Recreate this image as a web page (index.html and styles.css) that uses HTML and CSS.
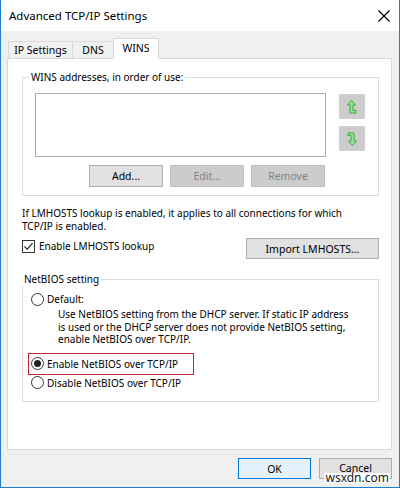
FILE: index.html
```html
<!DOCTYPE html>
<html lang="en">
<head>
    <meta charset="UTF-8">
    <title>Advanced TCP/IP Settings</title>
    <link rel="stylesheet" href="styles.css">
</head>
<body>

<div class="window">
    <div class="titlebar">
        <span class="title">Advanced TCP/IP Settings</span>
        <span class="close">
            <svg width="12" height="12" viewBox="0 0 12 12"><path d="M0.5 0.5 L11.5 11.5 M11.5 0.5 L0.5 11.5" stroke="#000" stroke-width="1.1" fill="none"/></svg>
        </span>
    </div>

    <div class="client">
        <div class="tabs">
            <div class="tab tab-ip">IP Settings</div>
            <div class="tab tab-dns">DNS</div>
            <div class="tab tab-wins active">WINS</div>
        </div>

        <div class="panel">
            <fieldset class="group wins-group">
                <legend>WINS addresses, in order of use:</legend>
                <div class="list-row">
                    <div class="listbox"></div>
                    <div class="order-btns">
                        <button class="icon-btn" disabled>
                            <svg width="10" height="14" viewBox="0 0 10 14"><path d="M4.5 0.5 L8.5 5 H6 V10.5 H9 V13 H3 V5 H0.5 Z" fill="#9be39b" stroke="#3aa83a" stroke-width="1" stroke-linejoin="miter"/></svg>
                        </button>
                        <button class="icon-btn" disabled>
                            <svg width="10" height="14" viewBox="0 0 10 14"><path d="M5.5 13.5 L1.5 9 H4 V3.5 H1 V1 H7 V9 H9.5 Z" fill="#9be39b" stroke="#3aa83a" stroke-width="1" stroke-linejoin="miter"/></svg>
                        </button>
                    </div>
                </div>
                <div class="btn-row">
                    <button class="btn">Add...</button>
                    <button class="btn" disabled>Edit...</button>
                    <button class="btn" disabled>Remove</button>
                </div>
            </fieldset>

            <p class="note">If LMHOSTS lookup is enabled, it applies to all connections for which<br>TCP/IP is enabled.</p>

            <div class="lmhosts-row">
                <label class="check">
                    <span class="box">
                        <svg width="11" height="11" viewBox="0 0 11 11"><path d="M1.5 5.5 L4.2 8.2 L9.5 2.2" stroke="#222" stroke-width="1.1" fill="none"/></svg>
                    </span>
                    Enable LMHOSTS lookup
                </label>
                <button class="btn import-btn">Import LMHOSTS...</button>
            </div>

            <fieldset class="group netbios-group">
                <legend>NetBIOS setting</legend>
                <label class="radio-row"><span class="radio"></span>Default:</label>
                <p class="desc">Use NetBIOS setting from the DHCP server. If static IP address<br>is used or the DHCP server does not provide NetBIOS setting,<br>enable NetBIOS over TCP/IP.</p>
                <label class="radio-row marked"><span class="radio on"></span>Enable NetBIOS over TCP/IP</label>
                <label class="radio-row"><span class="radio"></span>Disable NetBIOS over TCP/IP</label>
            </fieldset>
        </div>

        <div class="footer">
            <button class="btn btn-default">OK</button>
            <button class="btn btn-cancel">Cancel</button>
            <span class="watermark">wsxdn.com</span>
        </div>
    </div>
</div>

</body>
</html>
```

FILE: styles.css
```css
body {
    margin: 0;
    font-family: "Noto Sans", "Open Sans", sans-serif;
    font-size: 10px;
    color: #000;
    background: #fff;
}
.window {
    width: 400px;
    height: 488px;
    box-sizing: border-box;
    border: 1px solid #1b7fd4;
    border-top: 0;
    background-color: #f0f0f0;
    display: flex;
    flex-direction: column;
}
.titlebar {
    height: 31px;
    flex: none;
    background-color: #fff;
    display: flex;
    align-items: center;
    padding: 0 9px 0 8px;
}
.title {
    font-size: 11.5px;
}
.close {
    margin-left: auto;
    display: flex;
}
.client {
    padding: 7px 7px 0 6px;
}
/* Tabs */
.tabs {
    height: 20px;
    display: flex;
    align-items: flex-end;
    padding-left: 1px;
}
.tab {
    height: 17px;
    box-sizing: border-box;
    border: 1px solid #d9d9d9;
    border-bottom: 0;
    margin-right: -1px;
    display: flex;
    align-items: center;
    justify-content: center;
    font-size: 10.5px;
}
.tab-ip { width: 65px; }
.tab-dns { width: 42px; }
.tab-wins { width: 46px; }
.tab.active {
    height: 21px;
    margin-bottom: -1px;
    background-color: #fff;
    position: relative;
    z-index: 1;
    padding-bottom: 2px;
}
.panel {
    height: 392px;
    box-sizing: border-box;
    background-color: #fff;
    border: 1px solid #d9d9d9;
    padding: 0 12px 0 14px;
}
/* Group boxes */
.group {
    margin: 0;
    border: 1px solid #dcdcdc;
    min-width: 0;
}
.group legend {
    line-height: 14px;
    padding: 0 2px;
    margin-left: -6px;
}
.wins-group {
    margin-top: 11px;
    padding: 0 12px 8px 12px;
}
.list-row {
    display: flex;
    margin-top: 9px;
}
.listbox {
    width: 291px;
    height: 64px;
    box-sizing: border-box;
    border: 1px solid #acacac;
    background: #fff;
}
.order-btns {
    margin-left: 13px;
    margin-top: 1px;
    display: flex;
    flex-direction: column;
    gap: 7px;
}
.icon-btn {
    width: 26px;
    height: 25px;
    padding: 0;
    border: 1px solid #d0d0d0;
    background-color: #cccccc;
    display: flex;
    align-items: center;
    justify-content: center;
}
.btn {
    font-family: inherit;
    font-size: 10.5px;
    color: #000;
    padding: 0;
    box-sizing: border-box;
    border: 1px solid #adadad;
    background-color: #e1e1e1;
}
.btn:disabled {
    color: #838383;
    border-color: #bfbfbf;
    background-color: #cccccc;
}
.btn-row {
    width: 290px;
    margin-top: 8px;
    display: flex;
    justify-content: flex-end;
    gap: 7px;
}
.btn-row .btn {
    width: 74px;
    height: 22px;
}
.note {
    margin: 11px 0 0 0;
    line-height: 12.5px;
}
.lmhosts-row {
    margin-top: 6px;
    display: flex;
    justify-content: space-between;
    align-items: flex-start;
}
.check {
    margin-top: 2px;
    display: flex;
    align-items: center;
    gap: 4px;
    line-height: 13px;
}
.box {
    width: 13px;
    height: 13px;
    box-sizing: border-box;
    border: 1px solid #333;
    background: #fff;
    display: flex;
}
.import-btn {
    width: 133px;
    height: 21px;
}
.netbios-group {
    margin-top: 13px;
    padding: 0 5px 10px 5px;
}
.radio-row {
    height: 16px;
    box-sizing: border-box;
    border: 1px solid transparent;
    padding-left: 2px;
    display: flex;
    align-items: center;
    gap: 3px;
}
.netbios-group legend + .radio-row {
    margin-top: 5px;
}
.radio-row.marked {
    width: 166px;
    height: 22px;
    margin-top: 7px;
    border-color: #c0282e;
}
.radio {
    width: 13px;
    height: 13px;
    box-sizing: border-box;
    border: 1px solid #333;
    border-radius: 50%;
    background: #fff;
    display: flex;
    align-items: center;
    justify-content: center;
}
.radio.on::after {
    content: "";
    width: 7px;
    height: 7px;
    border-radius: 50%;
    background: #222;
}
.desc {
    margin: 1px 0 0 30px;
    line-height: 12.5px;
}
.footer {
    position: relative;
    margin-top: 8px;
    display: flex;
    justify-content: flex-end;
    gap: 8px;
}
.footer .btn {
    width: 73px;
    height: 21px;
}
.btn-cancel {
    padding-bottom: 2px;
}
.btn-default {
    border-color: #0078d7;
    background-color: #e5f1fb;
}
.watermark {
    position: absolute;
    right: 2px;
    top: 15px;
    background: #fff;
    font-size: 12px;
    line-height: 10px;
    padding: 0 1px;
    color: #222;
}
```
